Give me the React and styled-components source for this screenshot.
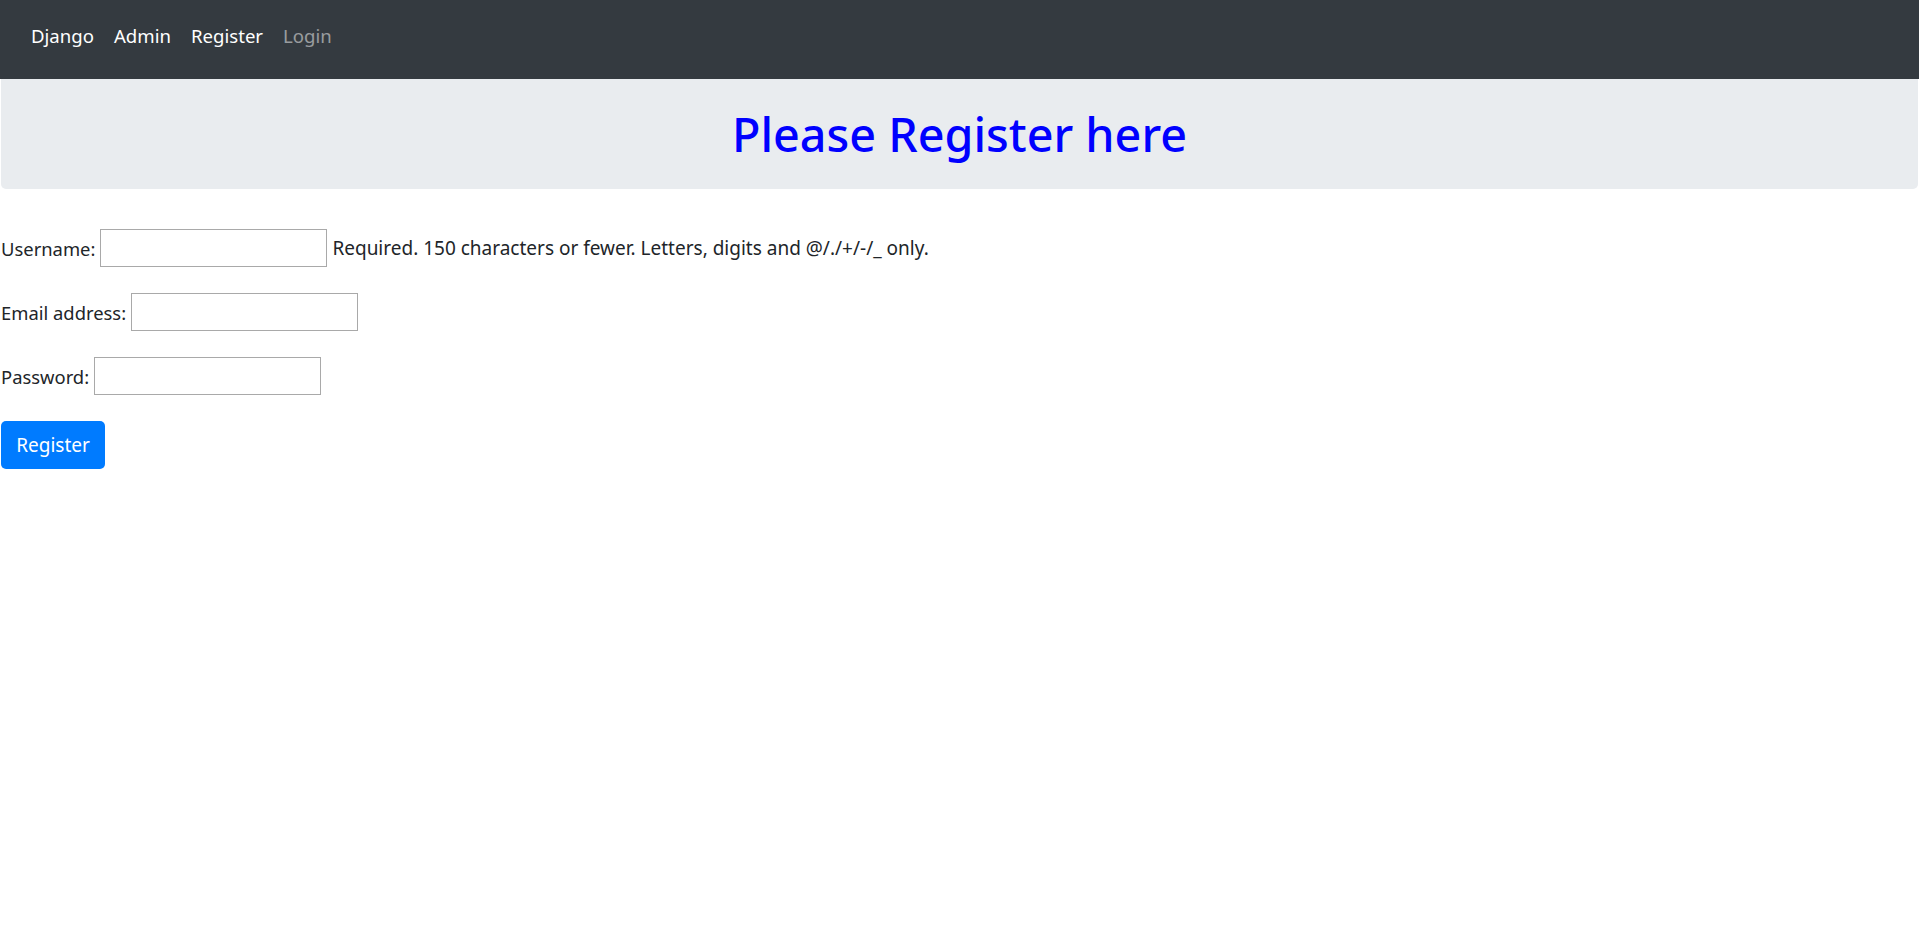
import styled, { createGlobalStyle } from "styled-components";

const GlobalStyle = createGlobalStyle`
  body {
    margin: 0;
    background: #ffffff;
    color: #212529;
    font-family: "Noto Sans", "Open Sans", sans-serif;
    font-size: 19px;
  }
`;

const Navbar = styled.nav`
  height: 79px;
  background-color: #343a40;
  display: flex;
  align-items: center;
  padding-left: 31px;
  gap: 20px;
`;

const NavLink = styled.a`
  color: ${(props) => (props.muted ? "rgba(255, 255, 255, 0.5)" : "#ffffff")};
  text-decoration: none;
  font-size: 18.6px;
  margin-top: -8px;
  cursor: pointer;
`;

const Page = styled.div`
  padding-left: 1px;
  padding-right: 1px;
`;

const Jumbotron = styled.div`
  height: 110px;
  background-color: #e9ecef;
  border-radius: 0 0 5px 5px;
  display: flex;
  justify-content: center;
  align-items: center;
`;

const Heading = styled.h1`
  margin: 0;
  color: #0000ff;
  font-size: 46.7px;
  font-weight: 500;
  line-height: 1.2;
`;

const Form = styled.form`
  padding-top: 40px;
`;

const Row = styled.div`
  height: 38px;
  margin-bottom: 26px;
  display: flex;
  align-items: center;
  gap: 5px;
  white-space: nowrap;
`;

const Label = styled.label`
  font-size: 18.4px;
`;

const Input = styled.input`
  width: 227px;
  height: 38px;
  box-sizing: border-box;
  border: 1px solid #a9a9a9;
  padding: 2px 4px;
  font-size: 18px;
  margin: 0;
`;

const Help = styled.span``;

const Button = styled.button`
  width: 104px;
  height: 48px;
  background-color: #007bff;
  border: none;
  border-radius: 5px;
  color: #ffffff;
  font-family: inherit;
  font-size: 19px;
  cursor: pointer;
`;

const fields = [
  { label: "Username:", type: "text", help: "Required. 150 characters or fewer. Letters, digits and @/./+/-/_ only." },
  { label: "Email address:", type: "email" },
  { label: "Password:", type: "password" },
];

const App = () => {
  return (
    <>
      <GlobalStyle />
      <Navbar>
        <NavLink>Django</NavLink>
        <NavLink>Admin</NavLink>
        <NavLink>Register</NavLink>
        <NavLink muted>Login</NavLink>
      </Navbar>
      <Page>
        <Jumbotron>
          <Heading>Please Register here</Heading>
        </Jumbotron>
        <Form onSubmit={(e) => e.preventDefault()}>
          {fields.map((f) => (
            <Row key={f.label}>
              <Label>{f.label}</Label>
              <Input type={f.type} />
              {f.help && <Help>{f.help}</Help>}
            </Row>
          ))}
          <Button type="submit">Register</Button>
        </Form>
      </Page>
    </>
  );
};

export default App;
